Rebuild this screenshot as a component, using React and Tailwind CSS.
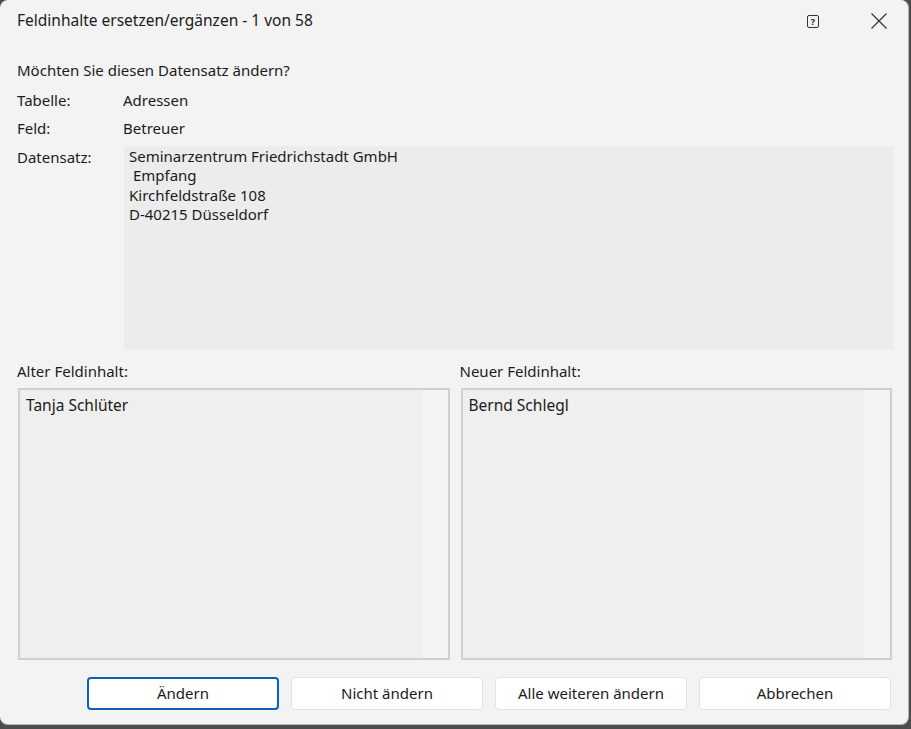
const font = { fontFamily: '"Segoe UI", "Noto Sans", sans-serif' }

function TextBox({ children }) {
  return (
    <div className="flex h-[272px] border-2 border-[#cfcfcf] bg-[#efefef]">
      <div className="flex-1 px-[6px] py-[4px] text-[15.5px]">{children}</div>
      <div className="w-[26px] bg-[#f3f3f3]" />
    </div>
  )
}

function DialogButton({ children, primary }) {
  return (
    <button
      className={`h-[33px] w-[192px] rounded-[4px] bg-white text-[15px] text-[#1b1b1b] ${
        primary ? 'border-2 border-[#0a63b8]' : 'border border-[#e3e3e3]'
      }`}
    >
      {children}
    </button>
  )
}

export default function App() {
  return (
    <div className="w-[911px] h-[729px] bg-[#4d4d4d] overflow-hidden" style={font}>
      <div className="flex flex-col w-[909px] h-[725px] bg-[#f3f3f3] rounded-lg border-r border-b border-[#b5b5b5] text-[15px] text-[#1b1b1b]">
        {/* Title bar */}
        <div className="flex items-center h-[41px] pl-[17px] pt-[1px]">
          <span className="flex-1 text-[15.5px]">Feldinhalte ersetzen/ergänzen - 1 von 58</span>
          <div className="flex items-center justify-center w-[12px] h-[13px] mr-[51px] border-[1.5px] border-[#333] rounded-[2px] text-[9px] font-bold leading-none">
            ?
          </div>
          <svg width="18" height="18" viewBox="0 0 18 18" className="mr-[20px]">
            <path d="M1.5 1.5 L16.5 16.5 M16.5 1.5 L1.5 16.5" stroke="#333" strokeWidth="1.2" />
          </svg>
        </div>

        {/* Body */}
        <div className="flex flex-col pl-[17px] pr-[15px] pt-[19px]">
          <div className="leading-[20px]">Möchten Sie diesen Datensatz ändern?</div>
          <div className="flex mt-[10px] leading-[20px]">
            <span className="w-[106px]">Tabelle:</span>
            <span>Adressen</span>
          </div>
          <div className="flex mt-[8px] leading-[20px]">
            <span className="w-[106px]">Feld:</span>
            <span>Betreuer</span>
          </div>
          <div className="flex mt-[8px]">
            <span className="w-[107px] pt-[1px] leading-[20px]">Datensatz:</span>
            <div className="flex-1 h-[204px] bg-[#ececec] px-[5px] pt-[1px] leading-[19.4px] whitespace-pre">
              {'Seminarzentrum Friedrichstadt GmbH\n Empfang\nKirchfeldstraße 108\nD-40215 Düsseldorf'}
            </div>
          </div>

          <div className="grid grid-cols-2 gap-[11px] mt-[11px] ml-[1px] mr-[1px]">
            <div className="flex flex-col gap-[7px]">
              <span className="-ml-[1px] leading-[20px]">Alter Feldinhalt:</span>
              <TextBox>Tanja Schlüter</TextBox>
            </div>
            <div className="flex flex-col gap-[7px]">
              <span className="-ml-[1px] leading-[20px]">Neuer Feldinhalt:</span>
              <TextBox>Bernd Schlegl</TextBox>
            </div>
          </div>

          <div className="flex justify-end gap-[12px] mt-[17px] pr-[2px]">
            <DialogButton primary>Ändern</DialogButton>
            <DialogButton>Nicht ändern</DialogButton>
            <DialogButton>Alle weiteren ändern</DialogButton>
            <DialogButton>Abbrechen</DialogButton>
          </div>
        </div>
      </div>
    </div>
  )
}
